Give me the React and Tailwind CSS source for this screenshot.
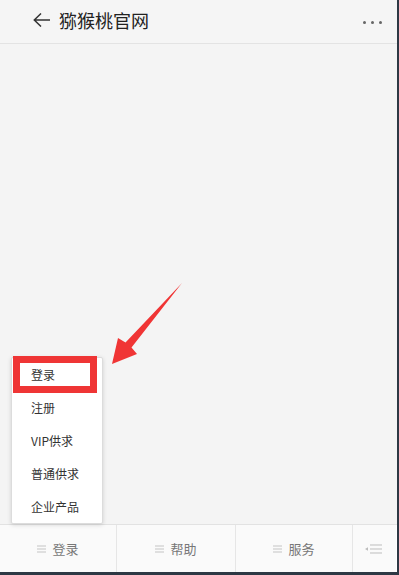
import React from "react";

const font = { fontFamily: '"Noto Sans CJK SC", "Noto Sans", sans-serif' };

function LinesIcon() {
  return (
    <svg width="9" height="8" viewBox="0 0 9 8" className="shrink-0">
      <path d="M0 1h9M0 4h9M0 7h9" stroke="#c4c4c4" strokeWidth="1" />
    </svg>
  );
}

function BarItem({ label }) {
  return (
    <div className="flex items-center justify-center gap-[6px] text-[13px] text-[#777]">
      <LinesIcon />
      <span>{label}</span>
    </div>
  );
}

export default function App() {
  const items = ["登录", "注册", "VIP供求", "普通供求", "企业产品"];
  return (
    <div
      className="relative w-[399px] h-[575px] overflow-hidden flex flex-col border-r-2 border-b-[3px] border-[#2d3844] bg-[#f4f4f4]"
      style={font}
    >
      <div className="h-[44px] shrink-0 flex items-center justify-between bg-[#f5f5f5] border-b border-[#e3e3e3] pl-[33px] pr-[15px] pb-[4px]">
        <div className="flex items-center gap-[8px]">
          <svg width="18" height="14" viewBox="0 0 18 14">
            <path d="M1 7h16M8 0.5L1.3 7 8 13.5" stroke="#333" strokeWidth="1.5" fill="none" />
          </svg>
          <span className="text-[18px] leading-none text-[#222]">猕猴桃官网</span>
        </div>
        <div className="flex items-center gap-[5px] pt-[6px]">
          <span className="w-[3px] h-[3px] rounded-full bg-[#666]" />
          <span className="w-[3px] h-[3px] rounded-full bg-[#666]" />
          <span className="w-[3px] h-[3px] rounded-full bg-[#666]" />
        </div>
      </div>

      <div className="flex-1 bg-[#f4f4f4]" />

      <div className="h-[48px] shrink-0 grid grid-cols-[116px_119px_117px_1fr] border-t border-[#e2e2e2] bg-[#fafafa]">
        <BarItem label="登录" />
        <div className="border-l border-[#e6e6e6] flex items-center justify-center">
          <BarItem label="帮助" />
        </div>
        <div className="border-l border-[#e6e6e6] flex items-center justify-center">
          <BarItem label="服务" />
        </div>
        <div className="border-l border-[#e6e6e6] border-r border-r-[#ffffff] flex items-center justify-center pr-[2px]">
          <svg width="18" height="10" viewBox="0 0 18 10">
            <path d="M0 5L3 3.2V6.8Z" fill="#bbb" />
            <path d="M5 1h12M5 5h12M5 9h12" stroke="#bdbdbd" strokeWidth="1" />
          </svg>
        </div>
      </div>

      <div className="absolute left-[11px] top-[357px] w-[92px] bg-white border border-[#dcdcdc] rounded-[2px] shadow-[0_1px_4px_rgba(0,0,0,0.15)]">
        {items.map((t) => (
          <div key={t} className="h-[33px] flex items-center pl-[19px] text-[12px] text-[#333]">
            {t}
          </div>
        ))}
      </div>

      <div className="absolute left-[13px] top-[356px] w-[84px] h-[37px] border-[7px] border-[#ef3535]" />

      <svg className="absolute left-0 top-0 pointer-events-none" width="399" height="575">
        <polygon
          points="182,283 131.5,347.5 137,354 112,364 118,338 125.5,342.5"
          fill="#f03535"
        />
      </svg>
    </div>
  );
}
